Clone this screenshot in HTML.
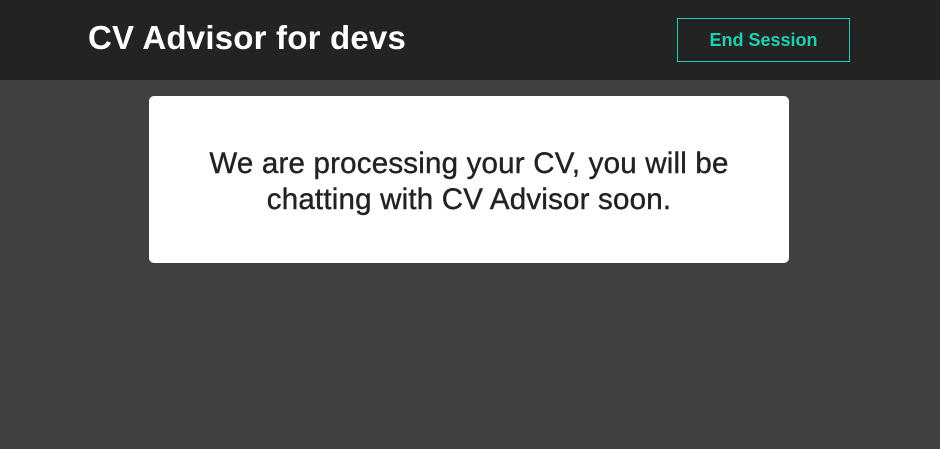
<!DOCTYPE html>
<html><head><style>
html,body{margin:0;width:940px;height:449px;overflow:hidden;background:#404040;font-family:"Liberation Sans",sans-serif;}
.h{position:absolute;left:0;top:0;width:940px;height:80px;background:#232323;}
.t{position:absolute;left:88px;top:18px;color:#fff;font-size:33px;font-weight:bold;line-height:40px;letter-spacing:0.2px;}
.b{position:absolute;left:677px;top:18px;width:171px;height:42px;border:1px solid #1ecfb0;color:#1ecfb0;font-size:18px;font-weight:bold;text-align:center;line-height:42px;box-sizing:content-box;}
.c{position:absolute;left:149px;top:96px;width:640px;height:167px;background:#fff;border-radius:5px;}
.c p{margin:0;position:absolute;top:50px;left:0;width:640px;text-align:center;font-size:29.5px;line-height:36px;color:#222;letter-spacing:0.2px;-webkit-text-stroke:0.4px #222;}
</style></head><body>
<div class="h"><div class="t">CV Advisor for devs</div><div class="b">End Session</div></div>
<div class="c"><p>We are processing your CV, you will be<br>chatting with CV Advisor soon.</p></div>
</body></html>
